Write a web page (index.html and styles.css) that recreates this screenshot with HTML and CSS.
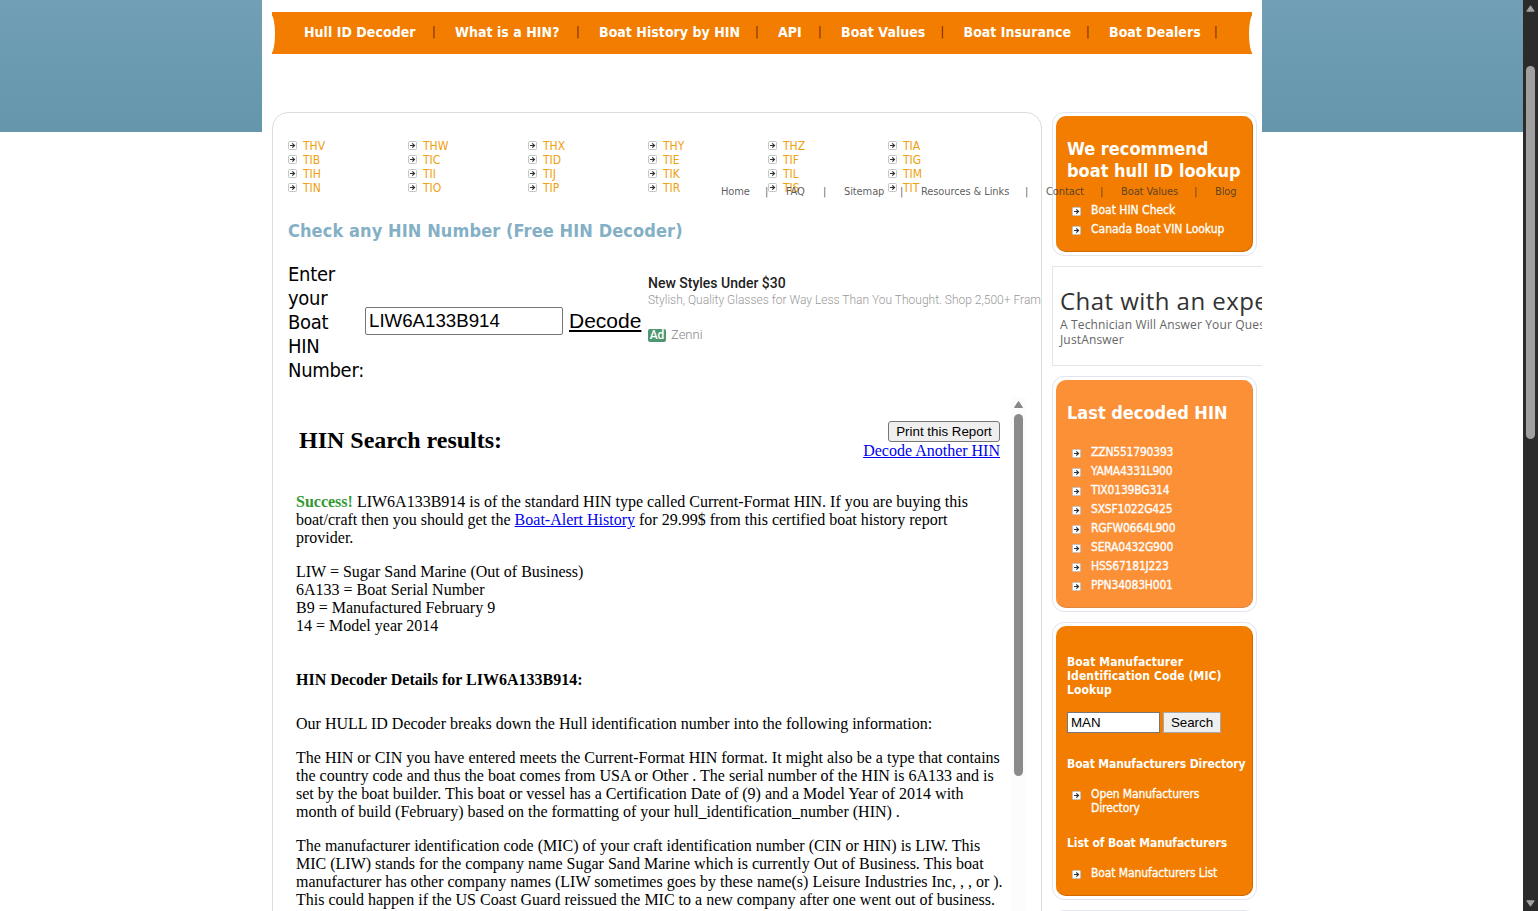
FILE: index.html
```html
<!DOCTYPE html>
<html lang="en">
<head>
<meta charset="UTF-8">
<title>Hull ID Decoder - HIN Search</title>
<meta name="viewport" content="width=device-width, initial-scale=1">
<link rel="stylesheet" href="styles.css">
</head>
<body>

<svg class="defs" width="0" height="0">
  <symbol id="arrow" viewBox="0 0 9 9">
    <rect x=".5" y=".5" width="8" height="8" rx="1" fill="#fff" stroke="#c4c4c4"/>
    <path d="M2 4.5h4M4.3 2.3L6.5 4.5L4.3 6.7" fill="none" stroke="#333" stroke-width="1.2"/>
  </symbol>
</svg>

<div id="wrap">
  <ul class="topnav">
    <li><a>Hull ID Decoder</a></li>
    <li><a>What is a HIN?</a></li>
    <li><a>Boat History by HIN</a></li>
    <li><a>API</a></li>
    <li><a>Boat Values</a></li>
    <li><a>Boat Insurance</a></li>
    <li><a>Boat Dealers</a></li>
  </ul>

  <div class="columns">
    <main>
      <ul class="mics">
        <li><svg><use href="#arrow"/></svg>THV</li>
        <li><svg><use href="#arrow"/></svg>THW</li>
        <li><svg><use href="#arrow"/></svg>THX</li>
        <li><svg><use href="#arrow"/></svg>THY</li>
        <li><svg><use href="#arrow"/></svg>THZ</li>
        <li><svg><use href="#arrow"/></svg>TIA</li>
        <li><svg><use href="#arrow"/></svg>TIB</li>
        <li><svg><use href="#arrow"/></svg>TIC</li>
        <li><svg><use href="#arrow"/></svg>TID</li>
        <li><svg><use href="#arrow"/></svg>TIE</li>
        <li><svg><use href="#arrow"/></svg>TIF</li>
        <li><svg><use href="#arrow"/></svg>TIG</li>
        <li><svg><use href="#arrow"/></svg>TIH</li>
        <li><svg><use href="#arrow"/></svg>TII</li>
        <li><svg><use href="#arrow"/></svg>TIJ</li>
        <li><svg><use href="#arrow"/></svg>TIK</li>
        <li><svg><use href="#arrow"/></svg>TIL</li>
        <li><svg><use href="#arrow"/></svg>TIM</li>
        <li><svg><use href="#arrow"/></svg>TIN</li>
        <li><svg><use href="#arrow"/></svg>TIO</li>
        <li><svg><use href="#arrow"/></svg>TIP</li>
        <li><svg><use href="#arrow"/></svg>TIR</li>
        <li><svg><use href="#arrow"/></svg>TIS</li>
        <li><svg><use href="#arrow"/></svg>TIT</li>
      </ul>

      <h2 class="check">Check any HIN Number (Free HIN Decoder)</h2>

      <div class="decoder">
        <label for="hin">Enter your Boat HIN Number:</label>
        <input type="text" id="hin" value="LIW6A133B914">
        <a class="decode">Decode</a>
        <div class="ad">
          <b>New Styles Under $30</b>
          <p>Stylish, Quality Glasses for Way Less Than You Thought. Shop 2,500+ Fram</p>
          <div class="adby"><span>Ad</span>Zenni</div>
        </div>
      </div>

      <div class="frame">
        <div class="report">
          <div class="reporthead">
            <h2>HIN Search results:</h2>
            <div class="actions">
              <button>Print this Report</button>
              <a href="#">Decode Another HIN</a>
            </div>
          </div>
          <p><b class="ok">Success!</b> LIW6A133B914 is of the standard HIN type called Current-Format HIN. If you are buying this<br>boat/craft then you should get the <a href="#">Boat-Alert History</a> for 29.99$ from this certified boat history report<br>provider.</p>
          <p>LIW = Sugar Sand Marine (Out of Business)<br>6A133 = Boat Serial Number<br>B9 = Manufactured February 9<br>14 = Model year 2014</p>
          <h4>HIN Decoder Details for LIW6A133B914:</h4>
          <p>Our HULL ID Decoder breaks down the Hull identification number into the following information:</p>
          <p>The HIN or CIN you have entered meets the Current-Format HIN format. It might also be a type that contains<br>the country code and thus the boat comes from USA or Other . The serial number of the HIN is 6A133 and is<br>set by the boat builder. This boat or vessel has a Certification Date of (9) and a Model Year of 2014 with<br>month of build (February) based on the formatting of your hull_identification_number (HIN) .</p>
          <p>The manufacturer identification code (MIC) of your craft identification number (CIN or HIN) is LIW. This<br>MIC (LIW) stands for the company name Sugar Sand Marine which is currently Out of Business. This boat<br>manufacturer has other company names (LIW sometimes goes by these name(s) Leisure Industries Inc, , , or ).<br>This could happen if the US Coast Guard reissued the MIC to a new company after one went out of business.</p>
        </div>
        <div class="innerscroll">
          <svg width="9" height="7"><path d="M4.5 0.5L8.5 6.5H.5z" fill="#888" stroke="#888" stroke-linejoin="round"/></svg>
          <i></i>
        </div>
      </div>
    </main>

    <aside>
      <div class="box recommend">
        <div class="inner">
          <h3>We recommend<br>boat hull ID lookup</h3>
          <ul>
            <li><svg><use href="#arrow"/></svg>Boat HIN Check</li>
            <li><svg><use href="#arrow"/></svg>Canada Boat VIN Lookup</li>
          </ul>
        </div>
      </div>

      <div class="chat">
        <b>Chat with an expe</b>
        <p>A Technician Will Answer Your Ques</p>
        <p>JustAnswer</p>
      </div>

      <div class="box last">
        <div class="inner">
          <h3>Last decoded HIN</h3>
          <ul>
            <li><svg><use href="#arrow"/></svg>ZZN551790393</li>
            <li><svg><use href="#arrow"/></svg>YAMA4331L900</li>
            <li><svg><use href="#arrow"/></svg>TIX0139BG314</li>
            <li><svg><use href="#arrow"/></svg>SXSF1022G425</li>
            <li><svg><use href="#arrow"/></svg>RGFW0664L900</li>
            <li><svg><use href="#arrow"/></svg>SERA0432G900</li>
            <li><svg><use href="#arrow"/></svg>HSS67181J223</li>
            <li><svg><use href="#arrow"/></svg>PPN34083H001</li>
          </ul>
        </div>
      </div>

      <div class="box lookup">
        <div class="inner">
          <h5 class="mic">Boat Manufacturer<br>Identification Code (MIC)<br>Lookup</h5>
          <div class="search">
            <input type="text" value="MAN">
            <button>Search</button>
          </div>
          <h5 class="dir">Boat Manufacturers Directory</h5>
          <ul>
            <li><svg><use href="#arrow"/></svg>Open Manufacturers<br>Directory</li>
          </ul>
          <h5 class="list">List of Boat Manufacturers</h5>
          <ul>
            <li><svg><use href="#arrow"/></svg>Boat Manufacturers List</li>
          </ul>
        </div>
      </div>

      <div class="box more"></div>
    </aside>
  </div>

  <ul class="footnav">
    <li>Home</li>
    <li>FAQ</li>
    <li>Sitemap</li>
    <li>Resources &amp; Links</li>
    <li>Contact</li>
    <li>Boat Values</li>
    <li>Blog</li>
  </ul>
</div>

<div class="pagescroll">
  <svg width="9" height="7"><path d="M4.5 .8L8.2 6.2H.8z" fill="#a3a3a3" stroke="#a3a3a3" stroke-linejoin="round"/></svg>
  <i></i>
  <svg class="down" width="9" height="7"><path d="M4.5 6.2L8.2 .8H.8z" fill="#a3a3a3" stroke="#a3a3a3" stroke-linejoin="round"/></svg>
</div>

</body>
</html>
```
FILE: styles.css
```css
* { box-sizing: border-box; }
body { margin: 0; height: 911px; overflow: hidden; background: #fff linear-gradient(#709fb6, #6696ab) no-repeat 0 0 / 100% 132px; font-family: "DejaVu Sans Condensed", Tahoma, "DejaVu Sans", sans-serif; font-stretch: condensed; font-size: 12px; }
ul { list-style: none; margin: 0; padding: 0; }
.defs { position: absolute; }
#wrap { position: relative; width: 1000px; height: 911px; margin-left: 262px; padding: 12px 0 0 10px; background: #fff; overflow: hidden; }

/* top menu */
.topnav { position: relative; display: grid; grid-template-columns: 151px 144px 179px 63px 122.5px 145.5px 128px; width: 980px; height: 42px; padding-left: 32px; background: #f27d00; overflow: hidden; }
.topnav::before, .topnav::after { content: ""; position: absolute; top: 3px; width: 8px; height: 38px; border-radius: 50%; background: #fff; }
.topnav::before { left: -5px; }
.topnav::after { right: -5px; }
.topnav li { display: flex; justify-content: space-between; height: 40px; line-height: 40px; font-size: 14px; font-weight: bold; letter-spacing: 0.04px; color: #fff; white-space: nowrap; }
.topnav li::after { content: "|"; width: 4px; margin-right: 19px; font-size: 12px; font-weight: normal; color: #6b2000; }

.columns { display: flex; gap: 10px; margin-top: 58px; }
main { width: 770px; height: 820px; padding: 26px 0 0 15px; border: 1px solid #dcdcdc; border-radius: 16px 16px 0 0; flex: none; }

.mics { display: grid; grid-template-columns: repeat(6, 120px); line-height: 14px; color: #f0a010; }
.mics li { display: flex; align-items: center; }
.mics svg { width: 9px; height: 9px; margin: -1px 6px 0 0; }
.check { margin: 24px 0 0; font-size: 18px; line-height: 24px; color: #84b0c6; letter-spacing: 0.1px; }

.decoder { display: flex; align-items: center; height: 120px; margin-top: 19px; font-size: 20px; line-height: 24px; color: #000; }
.decoder label { width: 77px; letter-spacing: -0.3px; flex: none; }
#hin { width: 198px; height: 28px; margin-bottom: 2px; padding: 1px 3px; border: 1px solid #767676; border-radius: 2px; font: 18.7px "Liberation Sans", sans-serif; flex: none; }
.decode { width: 73px; margin: 0 0 2px 6px; font-family: "Liberation Sans", sans-serif; font-size: 21px; text-decoration: underline; flex: none; }
.ad { align-self: flex-start; width: 394px; margin: 13px 0 0 6px; font-family: Roboto, sans-serif; font-stretch: normal; font-size: 12px; line-height: 16px; overflow: hidden; white-space: nowrap; }
.ad b { display: block; font-size: 14px; font-weight: 500; line-height: 17px; color: #222; }
.ad p { margin: 0; color: #999; font-weight: 300; }
.adby { display: flex; align-items: center; margin-top: 19px; font-size: 13px; font-weight: 300; color: #888; }
.adby span { width: 18px; height: 13px; margin-right: 5px; border-radius: 2px; background: #4f9770; color: #fff; font-size: 12px; font-weight: 500; line-height: 13px; text-align: center; }

/* decoder result */
.frame { display: flex; margin-top: 15px; }
.report { width: 723px; padding: 24px 0 0 8px; font: 16px/18px "Liberation Serif", serif; color: #000; white-space: nowrap; flex: none; }
.report p { margin: 0 0 16px; }
.report a { color: #0000ee; text-decoration: underline; }
.report .ok { color: #339933; }
.reporthead { display: flex; justify-content: space-between; height: 72px; }
.reporthead h2 { margin: 5px 0 0 3px; font-size: 24px; line-height: 28px; }
.actions { display: flex; flex-direction: column; align-items: flex-end; margin-right: 11px; }
.actions button { width: 112px; height: 21px; padding: 0; border: 1px solid #767676; border-radius: 3px; background: #efefef; font: 13.33px "Liberation Sans", sans-serif; }
.report h4 { margin: 36px 0 26px; font-size: 16px; line-height: 18px; }
.innerscroll { width: 15px; height: 520px; padding: 4px 3px 0; background: #fcfcfc; }
.innerscroll svg { display: block; }
.innerscroll i { display: block; width: 9px; height: 362px; margin-top: 6px; border-radius: 5px; background: #8b8b8b; }

/* right column */
aside { width: 210px; flex: none; }
.box { width: 205px; margin-bottom: 10px; padding: 3px; border: 1px solid #e2e4ee; border-radius: 12px; color: #fff; }
.inner { height: 100%; padding: 0 0 0 11px; border-radius: 10px; background: #f27d00; border-right: 1px solid #d06a00; border-bottom: 1px solid #d06a00; overflow: hidden; white-space: nowrap; }
.recommend { height: 144px; }
.last { height: 236px; }
.last .inner { background: #fc9037; border-color: #e08840; }
.lookup { height: 278px; }
.more { height: 100px; }
.box h3 { margin: 0; padding-top: 22px; font-size: 18px; line-height: 22px; }
.box li { position: relative; padding-left: 24px; margin-bottom: 5px; line-height: 14px; letter-spacing: -0.1px; -webkit-text-stroke: 0.3px #fff; }
.box li svg { position: absolute; left: 5px; top: 4px; width: 9px; height: 9px; }
.recommend ul { margin-top: 21px; }
.box.recommend li { letter-spacing: 0; }
.last ul { margin-top: 21px; }
.box.last li { letter-spacing: -0.2px; }
.box h5 { margin: 0; font-size: 12px; line-height: 14px; letter-spacing: -0.1px; }
.box .mic { padding-top: 29px; letter-spacing: 0.1px; }
.search { display: flex; gap: 3px; margin: 15px 0 24px; }
.search input { width: 93px; height: 21px; padding: 1px 3px; border: 1px solid #767676; font: 13.33px "Liberation Sans", sans-serif; }
.search button { width: 58px; height: 21px; padding: 0; border: 1px solid #a8a8a8; background: #efefef; font: 13.33px "Liberation Sans", sans-serif; }
.lookup .dir { margin-bottom: 16px; }
.lookup .list { margin: 21px 0 16px; }

.chat { width: 220px; height: 100px; margin-bottom: 10px; padding: 18px 0 0 7px; border: 1px solid #e4e4e4; font-family: "Open Sans", sans-serif; font-stretch: normal; white-space: nowrap; }
.chat b { display: block; font-size: 24px; line-height: 32px; font-weight: normal; letter-spacing: 0.45px; color: #333; }
.chat p { margin: 0; font-size: 12px; line-height: 15px; color: #666; letter-spacing: 0.15px; }

/* small menu lies over the columns */
.footnav { position: absolute; left: 459px; top: 185px; display: grid; grid-template-columns: 65px 58px 77px 125px 75px 94px 30px; font-size: 11px; line-height: 14px; letter-spacing: -0.1px; color: rgba(50, 50, 50, .8); white-space: nowrap; }
.footnav li { display: flex; justify-content: space-between; }
.footnav li::after { content: "|"; width: 4px; margin-right: 17px; }
.footnav li:last-child::after { content: none; }

/* page scrollbar */
.pagescroll { position: fixed; right: 0; top: 0; width: 15px; height: 911px; padding: 5px 3px 4px; display: flex; flex-direction: column; background: #2b2b2b; }
.pagescroll i { width: 9px; height: 373px; margin-top: 54px; border-radius: 5px; background: #a0a0a0; }
.pagescroll .down { margin-top: auto; }
```
